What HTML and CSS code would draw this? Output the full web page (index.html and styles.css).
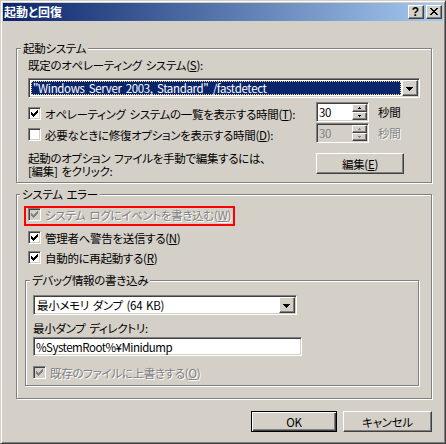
FILE: index.html
```html
<!DOCTYPE html>
<html lang="ja">
<head>
<meta charset="utf-8">
<title>起動と回復</title>
<link rel="stylesheet" href="styles.css">
</head>
<body>
<div class="window">
  <div class="titlebar">
    <span class="title">起動と回復</span>
    <div class="tbtns">
      <span class="tbtn help">?</span>
      <span class="tbtn"><svg width="8" height="7" viewBox="0 0 8 7"><path d="M0 0h2v1h-2zM6 0h2v1h-2zM1 1h2v1h-2zM5 1h2v1h-2zM2 2h4v1h-4zM3 3h2v1h-2zM2 4h4v1h-4zM1 5h2v1h-2zM5 5h2v1h-2zM0 6h2v1h-2zM6 6h2v1h-2z"/></svg></span>
    </div>
  </div>
  <div class="content">
    <section class="group g1">
      <div class="group-label">起動システム</div>
      <div class="label">既定のオペレーティング システム(<u>S</u>):</div>
      <div class="field combo os-combo">
        <div class="combo-text"><span class="sel">"Windows Server 2003, Standard" /fastdetect</span></div>
        <span class="btn drop"><svg width="7" height="4" viewBox="0 0 7 4"><path d="M0 0h7v1h-1v1h-1v1h-1v1h-1v-1h-1v-1h-1v-1h-1z"/></svg></span>
      </div>
      <div class="timer-row">
        <div class="check">
          <span class="box"><svg width="7" height="7" viewBox="0 0 7 7"><path d="M0 2h1v1h1v1h1v-1h1v-1h1v-1h1v-1h1v3h-1v1h-1v1h-1v1h-1v1h-1v-1h-1v-1h-1z"/></svg></span>
          <span>オペレーティング システムの一覧を表示する時間(<u>T</u>):</span>
        </div>
        <div class="field spin">
          <span class="spin-val">30</span>
          <span class="spin-btns">
            <span class="btn spin-b"><svg width="3" height="2" viewBox="0 0 3 2"><path d="M1 0h1v1h1v1h-3v-1h1z"/></svg></span>
            <span class="btn spin-b"><svg width="3" height="2" viewBox="0 0 3 2"><path d="M0 0h3v1h-1v1h-1v-1h-1z"/></svg></span>
          </span>
        </div>
        <span class="unit">秒間</span>
      </div>
      <div class="timer-row row2">
        <div class="check">
          <span class="box"></span>
          <span>必要なときに修復オプションを表示する時間(<u>D</u>):</span>
        </div>
        <div class="field spin disabled">
          <span class="spin-val">30</span>
          <span class="spin-btns">
            <span class="btn spin-b"><svg width="3" height="2" viewBox="0 0 3 2"><path d="M1 0h1v1h1v1h-3v-1h1z"/></svg></span>
            <span class="btn spin-b"><svg width="3" height="2" viewBox="0 0 3 2"><path d="M0 0h3v1h-1v1h-1v-1h-1z"/></svg></span>
          </span>
        </div>
        <span class="unit dis">秒間</span>
      </div>
      <div class="edit-row">
        <div class="edit-text"><div class="l1">起動のオプション ファイルを手動で編集するには、</div><div class="l2">[編集] をクリック:</div></div>
        <span class="btn push edit-btn">編集(<u>E</u>)</span>
      </div>
    </section>

    <section class="group g2">
      <div class="group-label">システム エラー</div>
      <div class="mark">
        <div class="check">
          <span class="box off"><svg width="7" height="7" viewBox="0 0 7 7"><path d="M0 2h1v1h1v1h1v-1h1v-1h1v-1h1v-1h1v3h-1v1h-1v1h-1v1h-1v1h-1v-1h-1v-1h-1z"/></svg></span>
          <span class="dis">システム ログにイベントを書き込む(<u>W</u>)</span>
        </div>
      </div>
      <div class="check row-n">
        <span class="box"><svg width="7" height="7" viewBox="0 0 7 7"><path d="M0 2h1v1h1v1h1v-1h1v-1h1v-1h1v-1h1v3h-1v1h-1v1h-1v1h-1v1h-1v-1h-1v-1h-1z"/></svg></span>
        <span>管理者へ警告を送信する(<u>N</u>)</span>
      </div>
      <div class="check row-r">
        <span class="box"><svg width="7" height="7" viewBox="0 0 7 7"><path d="M0 2h1v1h1v1h1v-1h1v-1h1v-1h1v-1h1v3h-1v1h-1v1h-1v1h-1v1h-1v-1h-1v-1h-1z"/></svg></span>
        <span>自動的に再起動する(<u>R</u>)</span>
      </div>

      <section class="group g3">
        <div class="group-label">デバッグ情報の書き込み</div>
        <div class="field combo dump-combo">
          <div class="combo-text plain">最小メモリ ダンプ (64 KB)</div>
          <span class="btn drop"><svg width="7" height="4" viewBox="0 0 7 4"><path d="M0 0h7v1h-1v1h-1v1h-1v1h-1v-1h-1v-1h-1v-1h-1z"/></svg></span>
        </div>
        <div class="label dir-label">最小ダンプ ディレクトリ:</div>
        <div class="field textbox">%SystemRoot%¥Minidump</div>
        <div class="check row-o">
          <span class="box off"><svg width="7" height="7" viewBox="0 0 7 7"><path d="M0 2h1v1h1v1h1v-1h1v-1h1v-1h1v-1h1v3h-1v1h-1v1h-1v1h-1v1h-1v-1h-1v-1h-1z"/></svg></span>
          <span class="dis">既存のファイルに上書きする(<u>O</u>)</span>
        </div>
      </section>
    </section>

    <div class="buttons">
      <span class="btn push default ok">OK</span>
      <span class="btn push cancel">キャンセル</span>
    </div>
  </div>
</div>
</body>
</html>
```

FILE: styles.css
```css
* { box-sizing: border-box; }

html, body {
  margin: 0;
  padding: 0;
  background: #D4D0C8;
}

body {
  font-family: "Noto Sans CJK JP", sans-serif;
  font-size: 11.5px;
  letter-spacing: -0.3px;
  word-spacing: 1.5px;
  line-height: 12px;
  color: #000;
  font-feature-settings: "palt";
}

u { text-decoration: underline; text-underline-offset: 1px; }

.window {
  width: 446px;
  height: 444px;
  border: 1px solid;
  border-color: #D4D0C8 #404040 #404040 #D4D0C8;
  box-shadow: inset 1px 1px 0 #fff, inset -1px -1px 0 #808080;
  padding: 2px;
  background: #D4D0C8;
  display: flex;
  flex-direction: column;
}

.titlebar {
  height: 18px;
  flex: none;
  background: linear-gradient(to right, #0A246A, #A6CAF0);
  display: flex;
  align-items: center;
  justify-content: space-between;
  padding: 0 1px 0 1px;
}

.title {
  color: #fff;
  font-weight: bold;
  font-size: 12px;
  letter-spacing: 0;
  line-height: 14px;
}

.tbtns { display: flex; gap: 2px; }

.tbtn {
  width: 16px;
  height: 14px;
  background: #D4D0C8;
  border: 1px solid;
  border-color: #fff #404040 #404040 #fff;
  box-shadow: inset -1px -1px 0 #808080;
  display: flex;
  align-items: center;
  justify-content: center;
}

.tbtn svg { display: block; fill: #000; margin: 0 1px 1px 0; }

.help {
  font-family: "Liberation Sans", sans-serif;
  font-weight: bold;
  font-size: 12px;
  letter-spacing: 0;
  line-height: 12px;
  padding-right: 1px;
}

.content {
  flex: 1;
  padding: 27px 11px 0 13px;
}

/* group boxes (etched frame, caption sits on the top line) */
.group {
  border: 1px solid #808080;
  box-shadow: inset 1px 1px 0 #fff, 1px 1px 0 #fff;
}

.group-label {
  display: table;
  margin-top: -7px;
  padding: 0 2px;
  height: 12px;
  line-height: 12px;
  background: #D4D0C8;
  white-space: nowrap;
}

.g1 { padding: 0 11px 5px 11px; }
.g1 > .group-label { margin-left: -7px; }
.g1 > .label { margin-top: 5px; }

.g2 { margin-top: 11px; padding: 0 12px 12px 8px; }
.g2 > .group-label { margin-left: -5px; }

.g3 { margin-top: 13px; padding: 0 7px 3px 7px; }
.g3 > .group-label { margin-left: -3px; }

.label { height: 12px; white-space: nowrap; }

/* sunken field */
.field {
  background: #fff;
  border: 1px solid;
  border-color: #808080 #fff #fff #808080;
  box-shadow: inset 1px 1px 0 #404040, inset -1px -1px 0 #D4D0C8;
}

/* raised button */
.btn {
  background: #D4D0C8;
  border: 1px solid;
  border-color: #fff #404040 #404040 #fff;
  box-shadow: inset -1px -1px 0 #808080;
  display: flex;
  align-items: center;
  justify-content: center;
  flex: none;
}

.btn svg { display: block; }

.combo {
  height: 20px;
  padding: 1px;
  display: flex;
}

.os-combo { margin-top: 7px; }

.combo-text {
  flex: 1;
  min-width: 0;
  padding: 1px;
  display: flex;
}

.combo-text.plain {
  padding: 0 0 0 2px;
  align-items: center;
  white-space: pre;
}

.sel {
  flex: 1;
  background: #0A246A;
  color: #fff;
  border: 1px dotted #F5DB95;
  padding-left: 1px;
  display: flex;
  align-items: center;
  white-space: pre;
  line-height: 12px;
  letter-spacing: -0.35px;
  word-spacing: 2px;
}

.drop { width: 16px; height: 16px; }
.drop svg { fill: #000; margin: 1px 1px 0 0; }

/* checkbox */
.check {
  display: flex;
  align-items: center;
  gap: 4px;
  white-space: pre;
}

.box {
  width: 13px;
  height: 13px;
  flex: none;
  background: #fff;
  border: 1px solid;
  border-color: #808080 #fff #fff #808080;
  box-shadow: inset 1px 1px 0 #404040, inset -1px -1px 0 #D4D0C8;
}

.box svg { display: block; margin: 2px 0 0 2px; fill: #000; }
.box.off { background: #D4D0C8; }
.box.off svg { fill: #808080; }

.dis {
  color: #808080;
  text-shadow: 1px 1px 0 #fff;
}

/* timer rows */
.timer-row {
  margin-top: 4px;
  height: 20px;
  display: grid;
  grid-template-columns: 288px 53px auto;
  align-items: start;
}

.timer-row.row2 { margin-top: 1px; }
.timer-row .check { margin-top: 5px; height: 13px; }

.spin {
  height: 20px;
  padding: 1px;
  display: flex;
}

.spin-val {
  flex: 1;
  padding-left: 1px;
  display: flex;
  align-items: center;
}

.spin.disabled { background: #D4D0C8; }
.spin.disabled .spin-val { color: #808080; }

.spin-btns {
  width: 15px;
  display: flex;
  flex-direction: column;
}

.spin-b { height: 8px; }
.spin-b svg { fill: #000; }
.spin.disabled .spin-b svg { fill: #808080; }

.unit { align-self: center; margin-left: 9px; }

.edit-row {
  margin-top: 9px;
  display: flex;
  align-items: flex-start;
}

.edit-text {
  width: 288px;
  white-space: pre;
}

.edit-text .l1 { height: 13px; }
.edit-text .l2 { height: 12px; }

.push { height: 21px; }

.edit-btn {
  width: 88px;
  margin-top: 1px;
}

/* system error group */
.mark {
  display: table;
  margin: 6px 0 0 -1px;
  border: 2px solid #ff0000;
  padding: 0 2px 0 2px;
  height: 20px;
}

.mark .check { align-items: flex-start; }
.mark .dis { line-height: 15px; }

.row-n { margin: 2px 0 0 3px; height: 19px; }
.row-r { margin: 1px 0 0 3px; height: 19px; }

.dump-combo { width: 264px; margin-top: 9px; }

.dir-label { margin-top: 7px; }

.textbox {
  margin-top: 3px;
  width: 269px;
  height: 19px;
  padding: 0 0 0 2px;
  display: flex;
  align-items: center;
  white-space: nowrap;
  letter-spacing: -0.5px;
}

.row-o { margin-top: 7px; height: 19px; }

.buttons {
  display: flex;
  justify-content: flex-end;
  gap: 6px;
  margin-top: 12px;
}

.ok { width: 86px; }
.cancel { width: 89px; }

.default {
  border-color: #000;
  box-shadow: inset 1px 1px 0 #fff, inset -1px -1px 0 #404040, inset -2px -2px 0 #808080;
}
```
